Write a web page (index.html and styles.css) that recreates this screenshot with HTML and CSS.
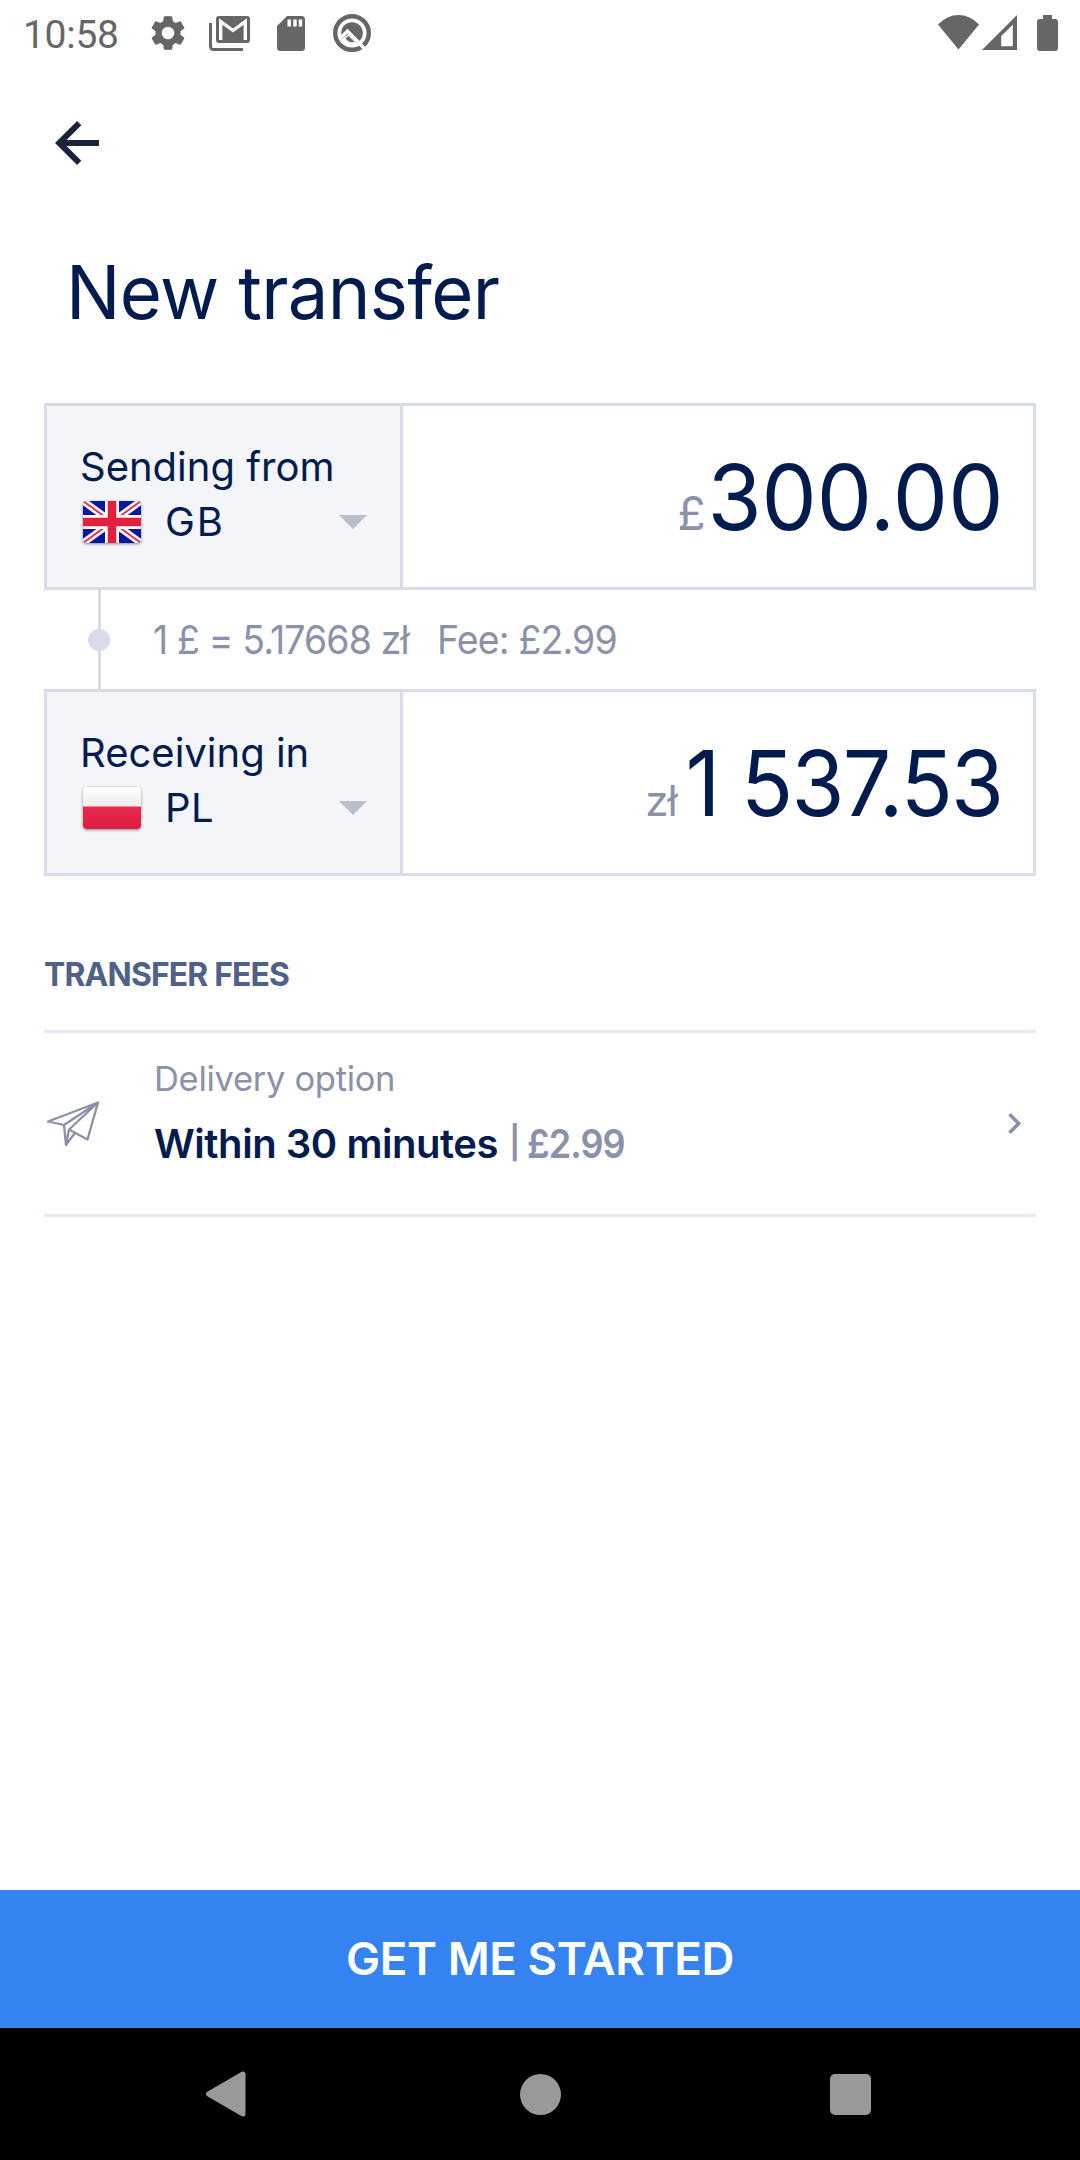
FILE: index.html
```html
<!DOCTYPE html>
<html lang="en">
<head>
<meta charset="utf-8">
<title>New transfer</title>
<link rel="stylesheet" href="styles.css">
</head>
<body>
<div class="screen">
  <header class="status">
    <span class="clock">10:58</span>
    <svg class="gear" width="42" height="42" viewBox="0 0 24 24" fill="currentColor"><path d="M19.14 12.94c.04-.3.06-.61.06-.94 0-.32-.02-.64-.07-.94l2.03-1.58a.49.49 0 0 0 .12-.61l-1.92-3.32a.49.49 0 0 0-.59-.22l-2.39.96c-.5-.38-1.03-.7-1.62-.94l-.36-2.54a.48.48 0 0 0-.48-.41h-3.84c-.24 0-.43.17-.47.41l-.36 2.54c-.59.24-1.13.57-1.62.94l-2.39-.96a.48.48 0 0 0-.59.22L2.74 8.87a.48.48 0 0 0 .12.61l2.03 1.58c-.05.3-.09.63-.09.94s.02.64.07.94l-2.03 1.58a.49.49 0 0 0-.12.61l1.92 3.32c.12.22.37.29.59.22l2.39-.96c.5.38 1.03.7 1.62.94l.36 2.54c.05.24.24.41.48.41h3.84c.24 0 .44-.17.47-.41l.36-2.54c.59-.24 1.13-.56 1.62-.94l2.39.96c.22.08.47 0 .59-.22l1.92-3.32a.48.48 0 0 0-.12-.61zM12 15.6a3.6 3.6 0 1 1 0-7.2 3.6 3.6 0 0 1 0 7.2z"/></svg>
    <svg class="mail" width="41" height="35" viewBox="0 0 41 35"><path d="M1.500 7v23.500a3 3 0 0 0 3 3H34" fill="none" stroke="currentColor" stroke-width="3"/><rect x="7" width="34" height="27" rx="3" fill="currentColor"/><path d="M11.700 24V5.500L24 14.500 36.300 5.500V24" fill="none" stroke="#fff" stroke-width="3.400"/></svg>
    <svg class="card" width="28" height="35" viewBox="0 0 28 35"><path d="M10 0h14.500A3.500 3.500 0 0 1 28 3.500v28a3.500 3.500 0 0 1-3.500 3.500h-21A3.500 3.500 0 0 1 0 31.500V10z" fill="currentColor"/><path d="M12.200 3.500v7M18 3.500v7M23.500 3.500v7" stroke="#fff" stroke-width="3.400"/></svg>
    <svg class="q" width="40" height="40" viewBox="0 0 40 40"><circle cx="20" cy="20" r="16.800" fill="none" stroke="currentColor" stroke-width="4.400"/><circle cx="20" cy="20" r="10.800" fill="currentColor"/><path d="M9 24.500l6.500-6.200L32 35" fill="none" stroke="#fff" stroke-width="3.600"/><path d="M9.500 26.500l6.500-5L25.500 31H14z" fill="#fff"/><path d="M13.500 25.200l3-2.300 6 6.200q-6 1.200-9-3.900z" fill="currentColor"/></svg>
    <svg class="signals" width="120" height="37" viewBox="0 0 120 37" fill="currentColor"><path d="M20.500 34.500L0 9.500Q9 0 20.500 0T41 9.500z"/><path d="M44 35L79 0v35zM63.200 31.200h11.600V9.800L63.200 21z" fill-rule="evenodd"/><path d="M105 0h9v4h3a3 3 0 0 1 3 3v26a3 3 0 0 1-3 3h-15a3 3 0 0 1-3-3V7a3 3 0 0 1 3-3h3z"/></svg>
  </header>
  <nav class="topbar">
    <svg width="44" height="44" viewBox="0 0 44 44" fill="none" stroke="#1a2438" stroke-width="6"><path d="M44 22H5M24.200 2.200L4.200 22l20 19.800"/></svg>
  </nav>
  <main class="content">
    <h1 class="title">New transfer</h1>
    <section class="box">
      <div class="country">
        <div class="label">Sending from</div>
        <div class="pick">
          <svg class="flag" width="58" height="42" viewBox="0 0 58 42"><rect width="58" height="42" fill="#0b17a0"/><path d="M0 0l58 42M58 0L0 42" stroke="#fff" stroke-width="7"/><path d="M0 0l58 42M58 0L0 42" stroke="#e8385a" stroke-width="2"/><path d="M29 0v42M0 21h58" stroke="#fff" stroke-width="14"/><path d="M29 0v42M0 21h58" stroke="#e31f3c" stroke-width="8.500"/></svg>
          <span class="code gb">GB</span>
          <svg class="caret" width="28" height="14" viewBox="0 0 28 14"><path d="M0 0h28L14 14z" fill="#b8becb"/></svg>
        </div>
      </div>
      <div class="amount"><span class="cur">£</span><span class="num send">300.00</span></div>
    </section>
    <div class="rate">
      <div class="rail"><i class="dot"></i></div>
      <span class="fx">1 £ = 5.17668 zł</span>
      <span class="fee">Fee: £2.99</span>
    </div>
    <section class="box">
      <div class="country">
        <div class="label">Receiving in</div>
        <div class="pick">
          <svg class="flag" width="58" height="42" viewBox="0 0 58 42"><defs><linearGradient id="w" x2="0" y2="1"><stop stop-color="#fff"/><stop offset="1" stop-color="#ededed"/></linearGradient><linearGradient id="r" x2="0" y2="1"><stop stop-color="#ea2a4b"/><stop offset="1" stop-color="#d91d40"/></linearGradient></defs><rect width="58" height="20" fill="url(#w)"/><rect y="19.500" width="58" height="22.500" fill="url(#r)"/></svg>
          <span class="code">PL</span>
          <svg class="caret" width="28" height="14" viewBox="0 0 28 14"><path d="M0 0h28L14 14z" fill="#b8becb"/></svg>
        </div>
      </div>
      <div class="amount"><span class="cur zl">zł</span><span class="num get">1 537.53</span></div>
    </section>
    <h2 class="heading">TRANSFER FEES</h2>
    <section class="option">
      <svg class="plane" width="54" height="46" viewBox="0 0 54 46" fill="none" stroke="#8a91a9" stroke-width="2.300" stroke-linejoin="round"><path d="M52 1.500L2 20.500l16 3.500zM18 24l2 20 3-15.500L52 1.500 41.500 38.500 23 28.500M20 44l8.500-11.500"/></svg>
      <div class="detail">
        <div class="sub">Delivery option</div>
        <div class="main"><span class="within">Within 30 minutes</span><span class="bar">|</span><span class="price">£2.99</span></div>
      </div>
      <svg class="chev" width="14" height="21" viewBox="0 0 14 21" fill="none" stroke="#8a91a9" stroke-width="3.600"><path d="M1.500 1.300l9.200 9.200-9.200 9.200"/></svg>
    </section>
  </main>
  <button class="cta">GET ME STARTED</button>
  <footer class="sysnav">
    <svg width="40" height="46" viewBox="0 0 40 46"><path d="M2.500 23L37 3v40z" fill="#999" stroke="#999" stroke-width="5" stroke-linejoin="round"/></svg>
    <i class="home"></i>
    <i class="recent"></i>
  </footer>
</div>
</body>
</html>
```
FILE: styles.css
```css
* { box-sizing: border-box; }
body { margin: 0; background: #fff; font-family: Inter, sans-serif; color: #001b4d; }
svg { display: block; flex: none; }
.screen { display: flex; flex-direction: column; width: 1080px; height: 2160px; background: #fff; }

.status { display: flex; height: 69px; padding: 0 22px 0 23px; color: #666; }
.clock { width: 124px; font: 400 39px/70px Roboto, sans-serif; letter-spacing: -0.3px; }
.gear { margin-top: 12px; }
.mail { margin: 16px 0 0 20px; }
.card { margin: 16px 0 0 27px; }
.q { margin: 13px 0 0 27px; }
.signals { margin: 15px 0 0 auto; }

.topbar { display: flex; padding: 52px 55px 0; height: 178px; }

.content { flex: 1; padding: 0 44px; }
.title { margin: 0 0 66px 22px; font-size: 74px; line-height: 90px; font-weight: 400; letter-spacing: -0.7px; transform: scaleX(.978); transform-origin: 0 50%; }

.box { display: flex; height: 187px; border: 3px solid #d9dbe8; }
.country { width: 356px; padding: 37px 33px 0 35px; background: #f3f5f9; border-right: 3px solid #d9dbe8; }
.label { margin-left: -2px; font-size: 40px; line-height: 48px; white-space: nowrap; }
.pick { display: flex; align-items: center; height: 61px; }
.flag { margin-left: 1px; border-radius: 4px; box-shadow: 0 1px 3px rgba(0, 0, 0, .45); }
.code { margin-left: 24px; font-size: 40px; line-height: 48px; letter-spacing: 0.4px; }
.gb { letter-spacing: 2px; }
.caret { margin-left: auto; }
.amount { flex: 1; display: flex; align-items: baseline; justify-content: flex-end; padding-right: 32px; line-height: 183px; white-space: nowrap; }
.cur { font-size: 46px; color: #8a91a9; }
.zl { font-size: 42px; letter-spacing: -1px; }
.num { font-size: 91px; transform-origin: 100% 50%; }
.send { margin: 0 -2px 0 -10px; transform: scaleX(.963); }
.get { margin: 0 -1px 0 -11px; letter-spacing: -1.8px; transform: scaleX(.942); }

.rate { display: flex; align-items: center; height: 99px; padding-left: 44px; font-size: 40px; color: #8a91a9; white-space: nowrap; }
.rail { display: flex; align-items: center; justify-content: center; width: 22px; height: 99px; background: linear-gradient(#d9dbe8, #d9dbe8) 10px 0 / 3px 100% no-repeat; }
.dot { width: 22px; height: 22px; border-radius: 50%; background: #d9dbe8; }
.fx { width: 284px; margin-left: 43px; letter-spacing: -0.9px; transform: scaleX(.935); transform-origin: 0 50%; }
.fee { letter-spacing: -0.9px; transform: scaleX(.936); transform-origin: 0 50%; }

.heading { margin: 78px 0 36px; font-size: 33px; line-height: 40px; font-weight: 700; letter-spacing: -0.85px; color: #4f6187; transform: scaleX(.965); transform-origin: 0 50%; }
.option { display: flex; align-items: center; height: 187px; border: solid #e8eaf3; border-width: 3px 0; }
.plane { margin-left: 2px; }
.detail { flex: 1; align-self: flex-start; margin-left: 54px; padding-top: 22px; }
.sub { font-size: 34.5px; line-height: 48px; letter-spacing: -0.3px; color: #8a91a9; }
.main { display: flex; margin-top: 17px; font-size: 40px; line-height: 48px; font-weight: 600; white-space: nowrap; }
.within { width: 355px; letter-spacing: -0.45px; }
.bar { width: 18px; font-size: 32px; line-height: 46px; color: #8a91a9; }
.price { letter-spacing: -1px; color: #8a91a9; transform: scaleX(.9); transform-origin: 0 50%; }
.chev { margin-right: 14px; }

.cta { height: 138px; border: 0; padding: 0; background: #3483f0; color: #fff; font: 600 45.5px/138px Inter, sans-serif; letter-spacing: -0.35px; text-align: center; }
.sysnav { display: flex; align-items: center; height: 132px; padding: 0 209px 0 206px; background: #000; }
.home { width: 41px; height: 41px; margin-left: 274px; border-radius: 50%; background: #999; }
.recent { width: 41px; height: 41px; margin-left: auto; border-radius: 5px; background: #999; }
```
